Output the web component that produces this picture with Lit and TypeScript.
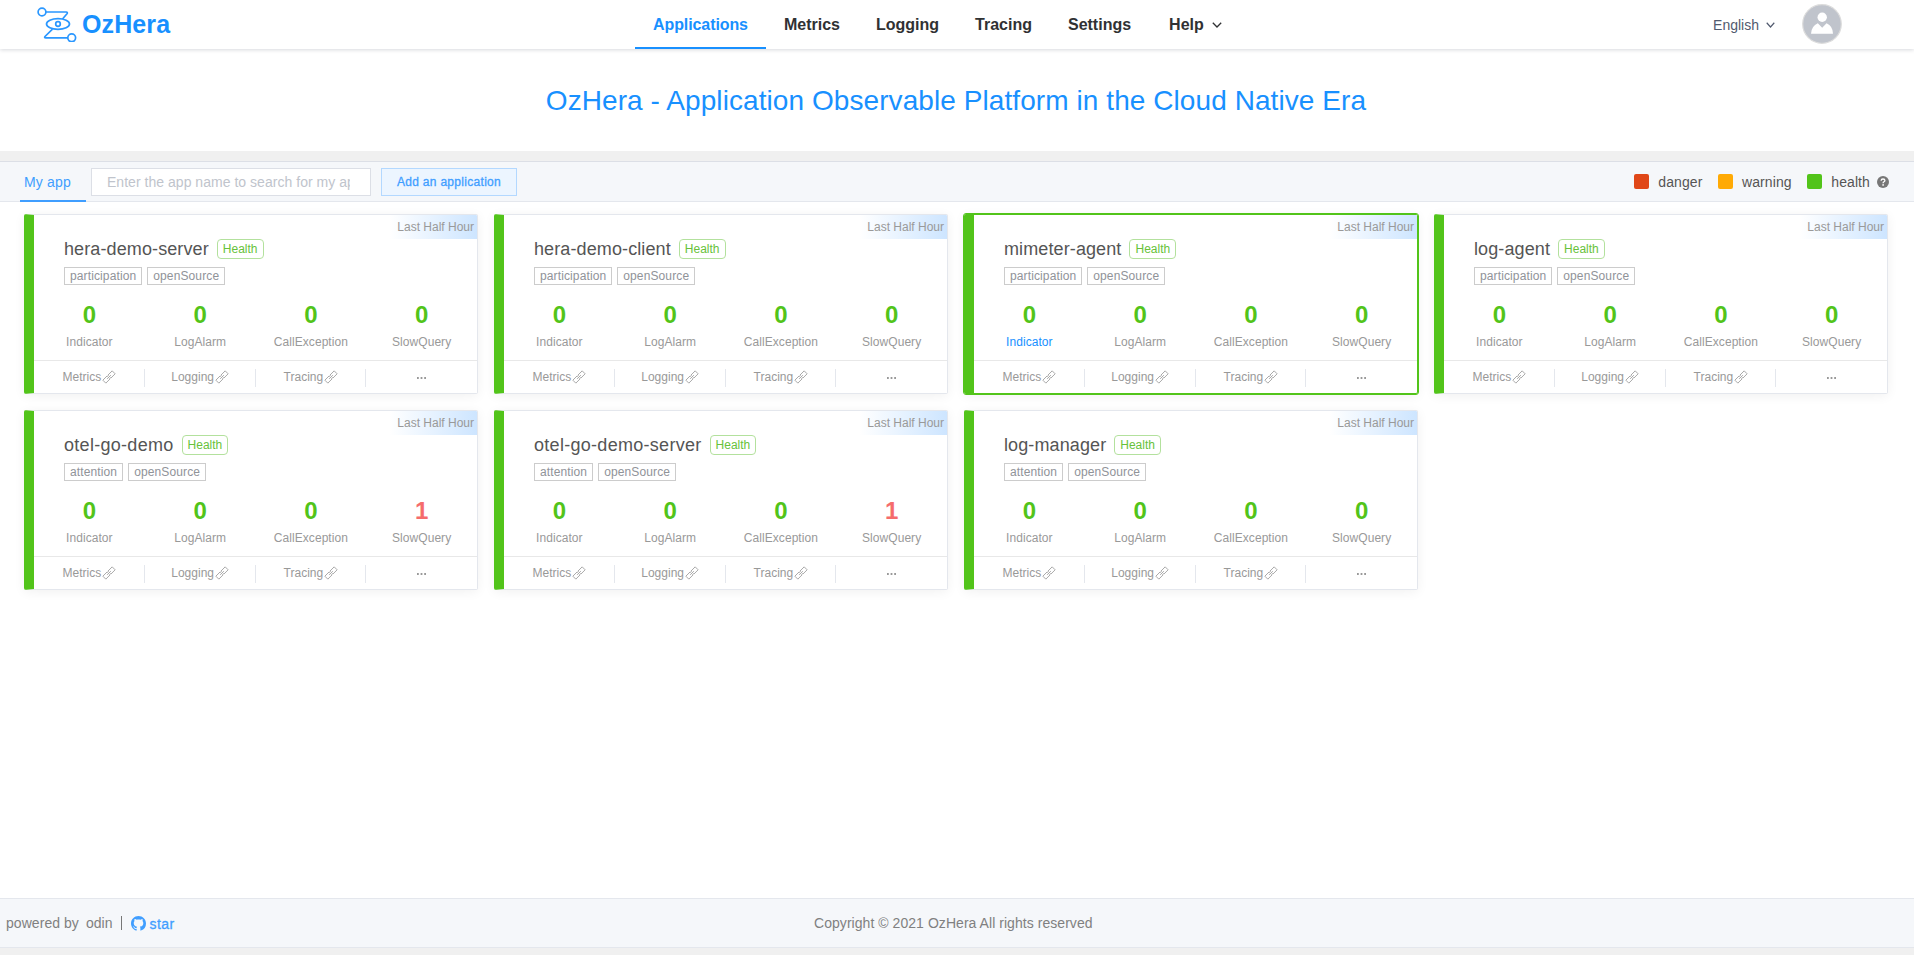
import { LitElement, html, css, svg } from "lit";
import { customElement, property } from "lit/decorators.js";
import { classMap } from "lit/directives/class-map.js";

interface App {
  name: string;
  relation: string;
  slow: number;
  active?: boolean;
}

const apps: App[] = [
  { name: "hera-demo-server", relation: "participation", slow: 0 },
  { name: "hera-demo-client", relation: "participation", slow: 0 },
  { name: "mimeter-agent", relation: "participation", slow: 0, active: true },
  { name: "log-agent", relation: "participation", slow: 0 },
  { name: "otel-go-demo", relation: "attention", slow: 1 },
  { name: "otel-go-demo-server", relation: "attention", slow: 1 },
  { name: "log-manager", relation: "attention", slow: 0 },
];

const linkIcon = html`<svg class="link" width="12" height="12" viewBox="0 0 12 12">
  <g fill="none" stroke="currentColor" stroke-width="0.8" transform="rotate(-45 6 6)">
    <path d="M5.4 5V3.9H-0.6V8.1H5.4V7" />
    <path d="M6.6 5V3.9H12.6V8.1H6.6V7" />
    <path d="M3.4 6H8.6" />
  </g>
</svg>`;

const chevron = (w: number) => svg`<svg class="chevron" width=${w} height="6" viewBox="0 0 10 6" preserveAspectRatio="none">
  <path d="M0.8 0.7L5 5L9.2 0.7" fill="none" stroke="currentColor" stroke-width="1.3" />
</svg>`;

@customElement("app-card")
export class AppCard extends LitElement {
  @property({ attribute: false }) app!: App;

  static styles = css`
    :host { display: block; height: 180px; }
    .card {
      box-sizing: border-box; height: 180px; display: flex; background: #fff;
      border: 1px solid #e4e7ed; border-left: 10px solid #52c41a; border-radius: 2px;
      box-shadow: 0 2px 12px rgba(0, 0, 0, 0.06); overflow: hidden;
    }
    .card.active { border-color: #52c41a; outline: 1px solid #52c41a; }
    .body { flex: 1; display: flex; flex-direction: column; position: relative; min-width: 0; }
    .period {
      position: absolute; top: 0; right: 0; box-sizing: border-box; height: 24px; width: 90px; line-height: 24px;
      text-align: right; padding-right: 3px; font-size: 12px; color: #999; white-space: nowrap;
      background: linear-gradient(90deg, #fff 3%, #cde5ff);
    }
    .head { display: flex; align-items: center; gap: 8px; height: 20px; margin: 24px 0 8px 30px; }
    .name { font-size: 18px; color: #555; line-height: 20px; letter-spacing: 0.11px; }
    .name.loose { letter-spacing: 0.29px; }
    .state {
      box-sizing: border-box; height: 20px; line-height: 18px; padding: 0 5px; border: 1px solid #b3e19d;
      border-radius: 4px; font-size: 12px; color: #67c23a;
    }
    .tags { display: flex; gap: 5px; margin-left: 30px; height: 18px; }
    .tag { box-sizing: border-box; height: 18px; line-height: 16px; padding: 0 5px; border: 1px solid #ccc; font-size: 12px; letter-spacing: 0.12px; color: #909399; }
    .stats { display: grid; grid-template-columns: repeat(4, 1fr); text-align: center; margin-top: 14px; height: 61px; flex: none; }
    .value { font-size: 24px; font-weight: 700; line-height: 32px; height: 32px; color: #52c41a; }
    .value.bad { color: #f56c6c; }
    .label { font-size: 12px; line-height: 22px; color: #999; letter-spacing: 0.06px; }
    .label.hot { color: #1890ff; }
    .actions { display: grid; grid-template-columns: repeat(4, 1fr); border-top: 1px solid #e8e8e8; height: 32px; flex: none; align-items: center; }
    .action {
      display: flex; align-items: center; justify-content: center; gap: 2px; box-sizing: border-box; height: 18px; margin-top: 2px; padding-bottom: 2px;
      border-right: 1px solid #e4e7ed; font-size: 12px; color: #999;
    }
    .action:last-child { border-right: 0; padding-bottom: 0; }
    .link { display: block; overflow: visible; }
  `;

  render() {
    const a = this.app;
    const stats: [string, number][] = [["Indicator", 0], ["LogAlarm", 0], ["CallException", 0], ["SlowQuery", a.slow]];
    return html`<div class=${classMap({ card: true, active: !!a.active })}>
      <div class="body">
        <div class="period">Last Half Hour</div>
        <div class="head"><span class=${classMap({ name: true, loose: a.name.startsWith("otel") })}>${a.name}</span><span class="state">Health</span></div>
        <div class="tags"><span class="tag">${a.relation}</span><span class="tag">openSource</span></div>
        <div class="stats">
          ${stats.map(([label, n], i) => html`<div>
            <div class=${classMap({ value: true, bad: n > 0 })}>${n}</div>
            <div class=${classMap({ label: true, hot: !!a.active && i === 0 })}>${label}</div>
          </div>`)}
        </div>
        <div class="actions">
          ${["Metrics", "Logging", "Tracing"].map((t) => html`<div class="action"><span>${t}</span>${linkIcon}</div>`)}
          <div class="action"><svg width="9" height="2" viewBox="0 0 9 2" fill="#999"><rect width="1.8" height="2" /><rect x="3.6" width="1.8" height="2" /><rect x="7.2" width="1.8" height="2" /></svg></div>
        </div>
      </div>
    </div>`;
  }
}

@customElement("app-root")
export class AppRoot extends LitElement {
  static styles = css`
    :host {
      display: flex; flex-direction: column; height: 955px; overflow: hidden; background: #f0f0f0;
      font-family: "Liberation Sans", Arial, sans-serif; font-size: 14px;
    }
    .top { display: grid; grid-template-columns: 635px 1fr auto; height: 49px; flex: none; background: #fff; box-shadow: 0 1px 4px rgba(0, 21, 41, 0.16); z-index: 1; }
    .brand { display: flex; align-items: center; gap: 5px; padding-left: 37px; color: #1890ff; }
    .brand-name { font-size: 25px; font-weight: 700; line-height: 49px; letter-spacing: 0.1px; }
    .nav { display: flex; }
    .nav-item { box-sizing: border-box; height: 49px; line-height: 49px; padding: 0 18px; font-size: 16px; font-weight: 700; color: #303133; }
    .nav-item.on { letter-spacing: -0.09px; color: #1890ff; border-bottom: 2px solid #1890ff; }
    .nav-item.help { display: flex; align-items: center; gap: 8px; padding-left: 20px; }
    .user { display: flex; align-items: center; padding-right: 72px; color: #515a6e; }
    .user .chevron { margin: 0 27px 0 7px; }
    .avatar { display: block; margin-top: -1px; }
    .hero { flex: none; height: 102px; line-height: 104px; padding-right: 2px; background: #fff; text-align: center; font-size: 28px; letter-spacing: 0.075px; color: #1890ff; }
    .bar {
      flex: none; box-sizing: border-box; margin-top: 10px; height: 41px; display: flex; align-items: center; padding: 0 25px 0 20px;
      background: #f5f7fa; border-top: 1px solid #dcdfe6; border-bottom: 1px solid #e4e7ed;
    }
    .tab { box-sizing: border-box; height: 41px; line-height: 42px; width: 66px; padding-left: 4px; letter-spacing: 0.18px; color: #409eff; border-bottom: 2px solid #409eff; }
    .search { box-sizing: border-box; width: 280px; height: 28px; margin: 0 10px 0 5px; border: 1px solid #dcdfe6; background: #fff; padding: 0 20px 0 15px; }
    .hint { overflow: hidden; white-space: nowrap; line-height: 26px; letter-spacing: 0.03px; color: #c0c4cc; }
    .add { box-sizing: border-box; width: 136px; height: 28px; line-height: 26px; text-align: center; background: #ecf5ff; border: 1px solid #b3d8ff; color: #409eff; font-size: 12px; letter-spacing: 0.3px; -webkit-text-stroke: 0.3px #409eff; }
    .legend { margin-left: auto; display: flex; align-items: center; letter-spacing: 0.1px; color: #555; }
    .swatch { width: 15px; height: 15px; border-radius: 2px; margin-right: 9px; }
    .swatch.danger { background: #e04718; }
    .swatch.warning { background: #ffaa05; margin-left: 15.5px; }
    .swatch.health { background: #52c41a; margin-left: 15.5px; }
    .q { margin-left: 7px; }
    .content { flex: 1; background: #fff; padding: 12px 26px 0 24px; }
    .grid { display: grid; grid-template-columns: repeat(4, 454px); gap: 16px; }
    .foot {
      flex: none; box-sizing: border-box; height: 50px; margin-bottom: 7px; display: grid; grid-template-columns: 814px 1fr; align-items: center;
      background: #f5f7fa; border-top: 1px solid #e4e7ed; border-bottom: 1px solid #e4e7ed; letter-spacing: 0.05px; color: #808080;
    }
    .powered { display: flex; align-items: center; padding-left: 6px; }
    .odin { margin-left: 7px; }
    .sep { width: 1px; height: 14px; background: #777; margin: 0 9px 0 8px; }
    .star { color: #409eff; margin-left: 4px; padding-top: 1px; letter-spacing: 0.4px; -webkit-text-stroke: 0.3px #409eff; }
  `;

  render() {
    return html`
      <header class="top">
        <div class="brand">
          <svg width="40" height="35" viewBox="0 0.5 40 35" fill="none" stroke="#2a97ff" stroke-width="1.7">
            <circle cx="5" cy="5.5" r="3.9" />
            <path d="M9 5.5H29.2Q31 5.7 30 7.3L25.5 12.5" stroke-linejoin="round" />
            <ellipse cx="21" cy="17.5" rx="11.5" ry="5.3" />
            <circle cx="21" cy="17.5" r="2.3" />
            <path d="M15.5 22.7L8 30Q7 31.3 8.8 31.3H31" />
            <circle cx="34.7" cy="31.3" r="3.9" />
          </svg>
          <span class="brand-name">OzHera</span>
        </div>
        <nav class="nav">
          <div class="nav-item on">Applications</div>
          ${["Metrics", "Logging", "Tracing", "Settings"].map((t) => html`<div class="nav-item">${t}</div>`)}
          <div class="nav-item help"><span>Help</span>${chevron(10)}</div>
        </nav>
        <div class="user">
          <span>English</span>${chevron(9)}
          <svg class="avatar" width="40" height="40" viewBox="0 0 40 40">
            <circle cx="20" cy="20" r="19.3" fill="#c0c4cc" stroke="#dcdcdc" stroke-width="1.2" />
            <circle cx="20.2" cy="13.3" r="4.7" fill="#fff" />
            <path d="M9 29.8Q9.5 22 15.8 19.3L20.2 23.8L24.6 19.3Q30.8 22 31 29.8Z" fill="#fff" />
          </svg>
        </div>
      </header>
      <div class="hero">OzHera - Application Observable Platform in the Cloud Native Era</div>
      <div class="bar">
        <div class="tab">My app</div>
        <div class="search"><div class="hint">Enter the app name to search for my app</div></div>
        <div class="add">Add an application</div>
        <div class="legend">
          <span class="swatch danger"></span><span>danger</span>
          <span class="swatch warning"></span><span>warning</span>
          <span class="swatch health"></span><span>health</span>
          <svg class="q" width="12" height="12" viewBox="0 0 12 12"><circle cx="6" cy="6" r="6" fill="#777" /><path d="M4.1 4.7Q4.2 3 6 3Q7.9 3 7.9 4.5Q7.9 5.3 7 5.8Q6.1 6.3 6.1 7.2" fill="none" stroke="#fff" stroke-width="1.3" /><circle cx="6.1" cy="8.9" r="0.85" fill="#fff" /></svg>
        </div>
      </div>
      <main class="content"><div class="grid">${apps.map((a) => html`<app-card .app=${a}></app-card>`)}</div></main>
      <footer class="foot">
        <div class="powered">
          <span>powered by</span><span class="odin">odin</span><span class="sep"></span>
          <svg width="15" height="15" viewBox="0 0 16 16" fill="#409eff"><path d="M8 0C3.580 0 0 3.580 0 8c0 3.540 2.290 6.530 5.470 7.590.4.070.55-.17.55-.38 0-.19-.01-.82-.01-1.490-2.010.37-2.530-.49-2.690-.94-.09-.23-.48-.94-.82-1.130-.28-.15-.68-.52-.01-.53.63-.01 1.080.58 1.230.82.72 1.210 1.870.87 2.330.66.070-.52.28-.87.51-1.070-1.780-.2-3.640-.89-3.640-3.950 0-.87.31-1.590.82-2.150-.08-.2-.36-1.020.08-2.120 0 0 .67-.21 2.200.82.64-.18 1.320-.27 2-.27s1.360.09 2 .27c1.530-1.040 2.200-.82 2.200-.82.44 1.100.16 1.920.08 2.120.51.56.82 1.270.82 2.150 0 3.070-1.870 3.750-3.650 3.950.29.25.54.73.54 1.480 0 1.070-.01 1.930-.01 2.200 0 .21.15.46.55.38A8.010 8.010 0 0 0 16 8c0-4.420-3.580-8-8-8z" /></svg>
          <span class="star">star</span>
        </div>
        <div>Copyright © 2021 OzHera All rights reserved</div>
      </footer>
    `;
  }
}
